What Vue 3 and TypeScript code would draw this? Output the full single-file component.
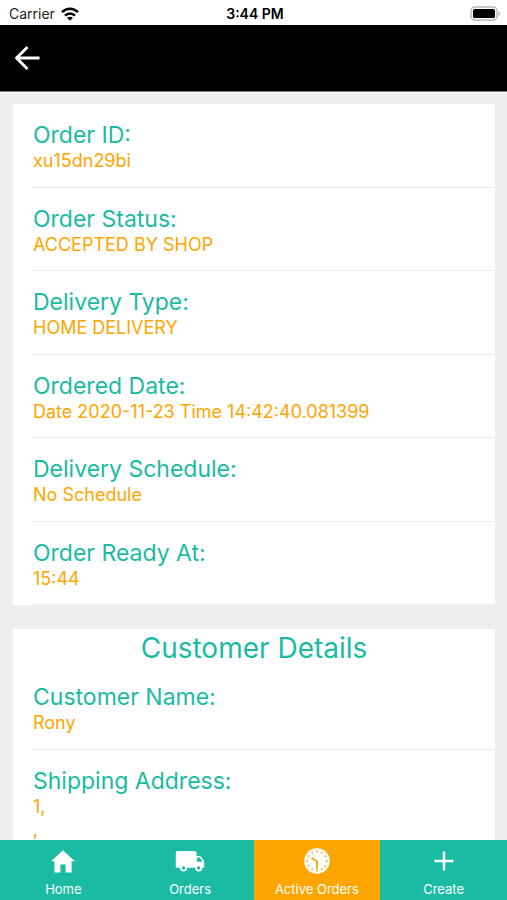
<script setup lang="ts">
interface Detail {
  label: string
  lines: string[]
}

interface Tab {
  id: 'home' | 'orders' | 'active' | 'create'
  label: string
}

const orderDetails: Detail[] = [
  { label: 'Order ID:', lines: ['xu15dn29bi'] },
  { label: 'Order Status:', lines: ['ACCEPTED BY SHOP'] },
  { label: 'Delivery Type:', lines: ['HOME DELIVERY'] },
  { label: 'Ordered Date:', lines: ['Date 2020-11-23 Time 14:42:40.081399'] },
  { label: 'Delivery Schedule:', lines: ['No Schedule'] },
  { label: 'Order Ready At:', lines: ['15:44'] },
]

const customerDetails: Detail[] = [
  { label: 'Customer Name:', lines: ['Rony'] },
  { label: 'Shipping Address:', lines: ['1,', ','] },
]

const tabs: Tab[] = [
  { id: 'home', label: 'Home' },
  { id: 'orders', label: 'Orders' },
  { id: 'active', label: 'Active Orders' },
  { id: 'create', label: 'Create' },
]

const activeTab: Tab['id'] = 'active'
const hours = Array.from({ length: 12 }, (_, i) => i * 30)
</script>

<template>
  <div class="screen">
    <div class="status">
      <div class="carrier">
        <span>Carrier</span>
        <svg width="18" height="14" viewBox="0 0 18 14" aria-hidden="true">
          <g fill="none" stroke="#000" stroke-width="2.6">
            <path d="M1 5.2C5.6.6 12.4.6 17 5.2" />
            <path d="M4 8.6c2.900-2.900 7.100-2.900 10 0" />
          </g>
          <path d="M9 13.600 6 10.900c1.700-1.600 4.300-1.600 6 0z" />
        </svg>
      </div>
      <span class="time">3:44 PM</span>
      <svg class="battery" width="31" height="15" viewBox="0 0 31 15" aria-hidden="true">
        <rect x="1" y="1" width="26" height="13" rx="4" fill="#fff" stroke="#b9b9b9" stroke-width="1.500" />
        <rect x="3" y="3" width="22" height="9" rx="1.500" />
        <path d="M28.500 5.200c2 .8 2 3.800 0 4.600z" fill="#b0b0b0" />
      </svg>
    </div>

    <header class="bar">
      <button class="back" type="button" aria-label="Back">
        <svg width="28" height="28" viewBox="0 0 28 28" aria-hidden="true">
          <path d="M14.500 3 3.500 14l11 11M3.500 14H26.500" fill="none" stroke="#fff" stroke-width="2.900" stroke-linejoin="round" />
        </svg>
      </button>
    </header>

    <main class="content">
      <section class="card">
        <dl class="list">
          <div v-for="item in orderDetails" :key="item.label" class="row">
            <dt>{{ item.label }}</dt>
            <dd v-for="(line, i) in item.lines" :key="i">{{ line }}</dd>
          </div>
        </dl>
      </section>

      <section class="card">
        <h2 class="heading">Customer Details</h2>
        <dl class="list">
          <div v-for="item in customerDetails" :key="item.label" class="row">
            <dt>{{ item.label }}</dt>
            <dd v-for="(line, i) in item.lines" :key="i">{{ line }}</dd>
          </div>
        </dl>
      </section>
    </main>

    <nav class="tabs">
      <button
        v-for="tab in tabs"
        :key="tab.id"
        type="button"
        class="tab"
        :class="{ active: tab.id === activeTab }"
      >
        <svg v-if="tab.id === 'home'" width="30" height="28" viewBox="0 0 30 28" aria-hidden="true">
          <path fill="#fff" d="M12.400 25.500v-8h5.200v8h6V14.300h3.200L15 3.200 3.200 14.300h3.200v11.200z" />
        </svg>
        <svg v-else-if="tab.id === 'orders'" width="30" height="28" viewBox="0 0 30 28" aria-hidden="true">
          <path fill="#fff" d="M2.500 4h17c1.300 0 2 .7 2 2v3h2.500c1 0 1.800.4 2.400 1.200l2.200 3c.4.500.6 1.100.6 2v5.600h-2.200a3.300 3.300 0 0 1-6.600 0h-8.500a3.300 3.300 0 0 1-6.600 0H.800V6c0-1.300.7-2 1.700-2z" />
          <circle cx="8.600" cy="21" r="3.500" fill="#fff" />
          <circle cx="8.600" cy="21" r="1.700" fill="#1abba2" />
          <circle cx="23.700" cy="21" r="3.500" fill="#fff" />
          <circle cx="23.700" cy="21" r="1.700" fill="#1abba2" />
          <path fill="#1abba2" d="M22 10.600h2.700l2.900 4.200H22z" />
        </svg>
        <svg v-else-if="tab.id === 'active'" width="30" height="28" viewBox="0 0 30 28" aria-hidden="true">
          <circle cx="15" cy="14" r="12.800" fill="#fff" />
          <circle
            v-for="angle in hours"
            :key="angle"
            cx="15"
            cy="4.300"
            r="0.900"
            fill="#ffa500"
            :transform="`rotate(${angle} 15 14)`"
          />
          <path d="M9.500 10.900 15 14.200v8" fill="none" stroke="#ffa500" stroke-width="1.800" />
        </svg>
        <svg v-else width="30" height="28" viewBox="0 0 30 28" aria-hidden="true">
          <path d="M15 4.500v19M5.500 14h19" stroke="#fff" stroke-width="2.500" />
        </svg>
        <span>{{ tab.label }}</span>
      </button>
    </nav>
  </div>
</template>

<style>
body {
  margin: 0;
}
</style>

<style scoped>
.screen {
  display: flex;
  flex-direction: column;
  height: 100vh;
  background: #eee;
  font-family: Inter, "Liberation Sans", sans-serif;
}

.status {
  display: grid;
  grid-template-columns: 1fr auto 1fr;
  align-items: center;
  height: 25px;
  padding: 2px 6px 0 9px;
  box-sizing: border-box;
  background: #fff;
  color: #222;
  font-size: 14px;
}

.carrier {
  display: flex;
  align-items: center;
  gap: 6px;
}

.time {
  color: #000;
  font-weight: 600;
}

.battery {
  justify-self: end;
}

.bar {
  display: flex;
  flex-shrink: 0;
  align-items: center;
  height: 67px;
  padding: 0 13px;
  box-sizing: border-box;
  background: #000;
  border-bottom: 1px solid #777;
  box-shadow: 0 1px #fff;
}

.back {
  display: flex;
  padding: 0;
  border: 0;
  background: none;
}

.content {
  display: flex;
  flex: 1;
  flex-direction: column;
  gap: 24px;
  min-height: 0;
  padding: 12px 12px 0 13px;
  overflow-y: auto;
  scrollbar-width: none;
}

.card {
  flex-shrink: 0;
  background: #fff;
}

.heading {
  margin: 0;
  color: #1abba2;
  font-size: 28px;
  font-weight: 400;
  line-height: 38px;
  text-align: center;
}

.heading + .list {
  margin-top: -1px;
}

.list {
  margin: 0;
  padding-left: 20px;
}

.row {
  padding: 17px 0 15px;
  border-bottom: 1px solid #ececec;
}

.row:nth-child(even) {
  padding-bottom: 14px;
}

dt {
  color: #1abba2;
  font-size: 23px;
  line-height: 28px;
}

dd {
  margin: 0;
  color: #ffa500;
  font-size: 18px;
  line-height: 23px;
}

.tabs {
  display: grid;
  flex-shrink: 0;
  grid-template-columns: repeat(4, 1fr);
  height: 60px;
}

.tab {
  display: flex;
  flex-direction: column;
  align-items: center;
  gap: 6px;
  padding: 7px 0 0;
  border: 0;
  background: #1abba2;
  color: #fff;
  font-family: inherit;
  font-size: 13px;
  line-height: 16px;
}

.tab.active {
  background: #ffa500;
}
</style>
